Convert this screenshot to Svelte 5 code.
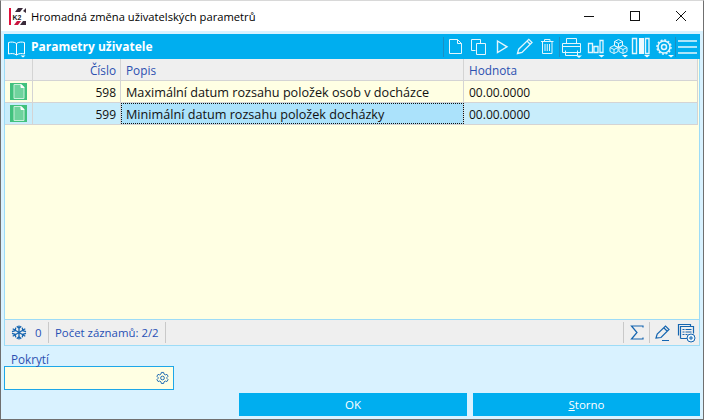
<script lang="ts">
	const rows = [
		{ no: 598, text: 'Maximální datum rozsahu položek osob v docházce', value: '00.00.0000' },
		{ no: 599, text: 'Minimální datum rozsahu položek docházky', value: '00.00.0000', current: true }
	];
</script>

<div class="window">
	<div class="titlebar">
		<svg class="logo" width="17" height="17" viewBox="0 0 17 17">
			<rect width="17" height="17" fill="#fff" />
			<rect width="2" height="17" fill="#e0103a" />
			<path d="M9 0h5l-3 4H6zM17 0v5l-3-2zM17 17h-6l3-4h3z" fill="#3a2a3a" />
			<path d="M12 13l-3 4H5l3-4z" fill="#c9153f" />
			<rect x="3" y="5" width="12" height="8" fill="#fff" />
			<text x="3.500" y="12" class="logo-text">K2</text>
		</svg>
		<span class="title">Hromadná změna uživatelských parametrů</span>
		<div class="winbtns">
			<svg width="12" height="12" viewBox="0 0 12 12"><path d="M1 6.500h10" stroke="#111" fill="none" /></svg>
			<svg width="12" height="12" viewBox="0 0 12 12"><rect x="1.500" y="1.500" width="9" height="9" stroke="#111" fill="none" /></svg>
			<svg width="12" height="12" viewBox="0 0 12 12"><path d="M1 1l10 10M11 1L1 11" stroke="#111" fill="none" /></svg>
		</div>
	</div>

	<div class="body">
		<section class="panel">
			<header class="panel-head">
				<svg class="book" width="18" height="18" viewBox="0 0 18 18" fill="none" stroke="#fff">
					<path d="M8.500 3.500C6.500 1.800 3 1.800 0.500 2.500V14C3 13.300 6.500 13.300 8.500 15C10.500 13.300 14 13.300 16.500 14V2.500C14 1.800 10.500 1.800 8.500 3.500ZM8.500 3.500V15" />
					<path class="solid" d="M12.500 15.500h5l-2.500 2z" fill="#fff" stroke="none" />
				</svg>
				<span class="panel-title">Parametry uživatele</span>
				<div class="tools">
					<span class="sep"></span>
					<svg viewBox="0 0 23 23"><path d="M5.500 4.500h8l4 4v10h-12zM13.500 4.500v4h4" /></svg>
					<svg viewBox="0 0 23 23"><path d="M8.500 15.500h-4v-11h9v4M9.500 8.500h9v11h-9z" /></svg>
					<svg viewBox="0 0 23 23"><path d="M7.500 6l9.500 5.800-9.500 5.800z" stroke-width="1.400" /></svg>
					<svg viewBox="0 0 23 23"><path d="M4.500 18.500l1.200-4.300L15.800 4.300l3.200 3.200L9 17.400zM14 6l3.200 3.200" stroke-width="1.300" /></svg>
					<svg viewBox="0 0 23 23"><path d="M5 6.500h12.500M8.500 6.500v-2h5.500v2M6.500 6.500v12h9.500v-12M9 9v7M11.250 9v7M13.500 9v7" /></svg>
					<span class="sep"></span>
					<svg viewBox="0 0 23 23"><path d="M6.500 8.500v-5h10v5M2.500 17.500v-9h18v9zM5.500 15.500v5h12v-5M2.500 11.500h18" /><path class="solid" d="M16 20.500h6l-3 2.500z" /></svg>
					<svg viewBox="0 0 23 23"><path d="M5.500 8.500h4v9h-4zM11 11.500h4v6h-4zM17 5.500h3v12h-3z" stroke-width="1.300" /><path class="solid" d="M15.500 20h6l-3 2.500z" /></svg>
					<svg viewBox="0 0 23 23"><path d="M12.500 4.500l4 2v4l-4 2-4-2v-4zM8.500 6.500l4 2 4-2M12.500 8.500v4M8 10.500l4 2v4l-4 2-4-2v-4zM4 12.500l4 2 4-2M8 14.500v4M17 10.500l4 2v4l-4 2-4-2v-4zM13 12.500l4 2 4-2M17 14.500v4" /><path class="solid" d="M16 20h6l-3 2.500z" /></svg>
					<svg viewBox="0 0 23 23"><path d="M3.500 3.500h4v15h-4zM16.500 3.500h3.500v15h-3.500z" stroke-width="1.400" /><path class="solid" d="M10 3h5v16h-5z" /><path class="solid" d="M15 20h6l-3 2.500z" /></svg>
					<svg viewBox="0 0 23 23"><circle cx="12" cy="12" r="6" stroke-width="1.500" /><circle cx="12" cy="12" r="2.500" stroke-width="1.500" /><circle cx="12" cy="12" r="7" stroke-width="1.500" stroke-dasharray="2 1.660" /><path class="solid" d="M16 20h6l-3 2.500z" /></svg>
					<span class="sep"></span>
					<svg viewBox="0 0 23 23"><path d="M2 6h19M2 12h19M2 18h19" stroke-width="1.300" /></svg>
				</div>
			</header>

			<div class="grid">
				<div class="row head">
					<div class="cell mark"></div>
					<div class="cell no">Číslo</div>
					<div class="cell desc">Popis</div>
					<div class="cell val">Hodnota</div>
				</div>
				{#each rows as row}
					<div class="row" class:current={row.current}>
						<div class="cell mark">
							<span class="badge">
								<svg width="12" height="15" viewBox="0 0 12 15"><path d="M1 0.500h7l3 3v11H1z" fill="#6fd39d" stroke="#c9f0da" /><path d="M8 0.500v3h3z" fill="#fff" stroke="#fff" /></svg>
							</span>
						</div>
						<div class="cell no">{row.no}</div>
						<div class="cell desc text">{row.text}</div>
						<div class="cell val">{row.value}</div>
					</div>
				{/each}
			</div>

			<footer class="status">
				<span class="st-item first">
					<svg width="16" height="15" viewBox="0 0 16 15" fill="none" stroke="#1565b0" stroke-width="1.300"><path d="M8 0.500v14M1.700 3.800l12.600 7.400M1.700 11.200l12.600-7.400M5.800 1.200L8 3.400l2.200-2.200M5.800 13.800L8 11.600l2.200 2.200M1 6.700l3.100-1 .7-3M15 6.700l-3.100-1-.7-3M1 8.300l3.100 1 .7 3M15 8.300l-3.100 1-.7 3" /></svg>
					<span class="zero">0</span>
				</span>
				<span class="st-item count">Počet záznamů: 2/2</span>
				<span class="st-spacer"></span>
				<span class="st-icon">
					<svg width="14" height="15" viewBox="0 0 14 15" fill="none" stroke="#1565b0" stroke-width="1.200"><path d="M13 2.500V1H1.500L7 7.500 1.500 14H13v-1.500" /></svg>
				</span>
				<span class="st-icon">
					<svg width="16" height="16" viewBox="0 0 16 16" fill="none" stroke="#1565b0" stroke-width="1.200"><path d="M1 13l1.200-4L10.500 1 14 4.500 6 12.500zM9 3l3.500 3.500M7 15.500h7" /></svg>
				</span>
				<svg class="add" width="19" height="20" viewBox="0 0 19 20" fill="none" stroke="#1565b0">
					<path d="M1.500 12.500v-11h12v2M3.500 15.500v-12h13v7M3.500 15.500h7" stroke-width="1.200" />
					<path d="M5.500 6.500h2M8.500 6.500h6M5.500 9h2M8.500 9h6M5.500 11.500h2M8.500 11.500h2" />
					<circle cx="14" cy="15" r="4" fill="#eaf6fd" />
					<path d="M12 15h4M14 13v4" />
				</svg>
			</footer>
		</section>

		<div class="field">
			<label for="cover">Pokrytí</label>
			<div class="input">
				<input id="cover" />
				<svg width="13" height="14" viewBox="0 0 14 14" fill="none" stroke="#1565b0"><path d="M5.800 1.500h2.400l.4 1.700 1.500.9 1.700-.5 1.200 2-1.300 1.400v.9l1.300 1.400-1.200 2-1.700-.5-1.500.9-.4 1.700H5.800l-.4-1.700-1.500-.9-1.700.5-1.200-2 1.300-1.400v-.9L1 5.600l1.200-2 1.700.5 1.500-.9z" transform="translate(0 -.5)" /><circle cx="7" cy="7" r="2" /></svg>
			</div>
		</div>

		<div class="actions">
			<button class="ok">OK</button>
			<button class="cancel"><u>S</u>torno</button>
		</div>
	</div>
</div>

<style>
	:global(body) {
		margin: 0;
		font-family: 'Open Sans', 'Noto Sans', sans-serif;
	}

	.window {
		width: 704px;
		height: 420px;
		box-sizing: border-box;
		display: flex;
		flex-direction: column;
		border: 1px solid #6f6f6f;
		border-top-color: #d8d8d8;
		background: #fff;
	}

	.titlebar {
		height: 30px;
		display: flex;
		align-items: center;
		padding-left: 8px;
		flex: none;
	}

	.logo {
		margin-right: 5px;
	}

	.logo-text {
		font: 800 7px 'Liberation Sans', sans-serif;
		fill: #222;
	}

	.title {
		font-size: 11.2px;
		color: #000;
	}

	.winbtns {
		margin-left: auto;
		display: flex;
		gap: 34px;
		margin-right: 16px;
	}

	.body {
		flex: 1;
		background: #d9f2ff;
		padding: 3px 3px 3px;
		display: flex;
		flex-direction: column;
		min-height: 0;
	}

	.panel {
		height: 312px;
		flex: none;
		box-sizing: border-box;
		display: flex;
		flex-direction: column;
		border: 1px solid #9ddcf7;
		border-top: none;
		background: #ffffe3;
	}

	.panel-head {
		height: 25px;
		flex: none;
		background: #00aeef;
		display: flex;
		align-items: center;
		color: #fff;
		margin: 0 -1px;
		padding-left: 4px;
	}

	.book {
		margin-right: 5px;
		margin-top: 4px;
	}

	.panel-title {
		font-size: 12px;
		font-weight: 700;
	}

	.tools {
		margin-left: auto;
		display: flex;
		align-items: center;
		padding-right: 1px;
	}

	.tools svg {
		width: 23px;
		height: 23px;
		fill: none;
		stroke: #e3f6fd;
	}

	.tools .solid {
		fill: #eefaff;
		stroke: none;
	}

	.sep {
		width: 1px;
		height: 20px;
		background: #1b8fc4;
	}

	.grid {
		flex: 1;
		min-height: 0;
	}

	.row {
		display: grid;
		grid-template-columns: 28px 88px 343px 234px;
		height: 22px;
		box-sizing: border-box;
		border-bottom: 1px solid #d4d4d4;
		background: #ffffe3;
		width: 693px;
		font-size: 12px;
		color: #111;
	}

	.row.head {
		background: #efefef;
		color: #2c50b0;
		font-size: 11.8px;
	}

	.row.current {
		background: #c8edfb;
	}

	.cell {
		display: flex;
		align-items: center;
		border-right: 1px solid #d4d4d4;
		padding: 1px 4px 0 5px;
		min-width: 0;
		white-space: nowrap;
	}

	.head .cell {
		padding-top: 0;
	}

	.cell.mark {
		padding: 0 0 0 5px;
	}

	.cell.no {
		justify-content: flex-end;
	}

	.cell.text {
		font-size: 12.65px;
	}

	.current .cell.text {
		background: #abe2fb;
		outline: 1px dotted #111;
		outline-offset: -1px;
	}

	.badge {
		width: 17px;
		height: 17px;
		background: #41c17d;
		display: flex;
		align-items: center;
		justify-content: center;
	}

	.status {
		height: 26px;
		flex: none;
		box-sizing: border-box;
		background: #efefef;
		border-top: 1px solid #9ddcf7;
		display: flex;
		align-items: center;
		font-size: 11.4px;
		color: #2750b5;
	}

	.st-item {
		height: 21px;
		box-sizing: border-box;
		display: flex;
		align-items: center;
		border-right: 1px solid #c9c9c9;
	}

	.st-item.first {
		width: 44px;
		gap: 8px;
		padding-left: 6px;
	}

	.st-item.count {
		width: 117px;
		padding-left: 6px;
	}

	.st-spacer {
		flex: 1;
	}

	.st-icon {
		height: 21px;
		width: 26px;
		box-sizing: border-box;
		display: flex;
		align-items: center;
		justify-content: center;
		border-left: 1px solid #c9c9c9;
	}

	.add {
		margin: 0 3px 0 2px;
	}

	.field {
		margin-top: 6px;
		width: 170px;
		flex: none;
	}

	.field label {
		display: block;
		font-size: 11.7px;
		line-height: 14px;
		color: #2c50b0;
		padding-left: 7px;
	}

	.input {
		height: 24px;
		box-sizing: border-box;
		border: 1px solid #1ea7e8;
		background: #ffffe3;
		display: flex;
		align-items: center;
		padding-right: 4px;
	}

	.input input {
		flex: 1;
		min-width: 0;
		border: none;
		background: none;
		outline: none;
	}

	.actions {
		margin-top: auto;
		display: flex;
		justify-content: flex-end;
		gap: 6px;
	}

	.actions button {
		height: 23px;
		border: none;
		background: #00aeef;
		color: #fff;
		font: 11.5px 'Open Sans', 'Noto Sans', sans-serif;
		padding: 0;
	}

	.ok {
		width: 228px;
	}

	.cancel {
		width: 227px;
	}
</style>
